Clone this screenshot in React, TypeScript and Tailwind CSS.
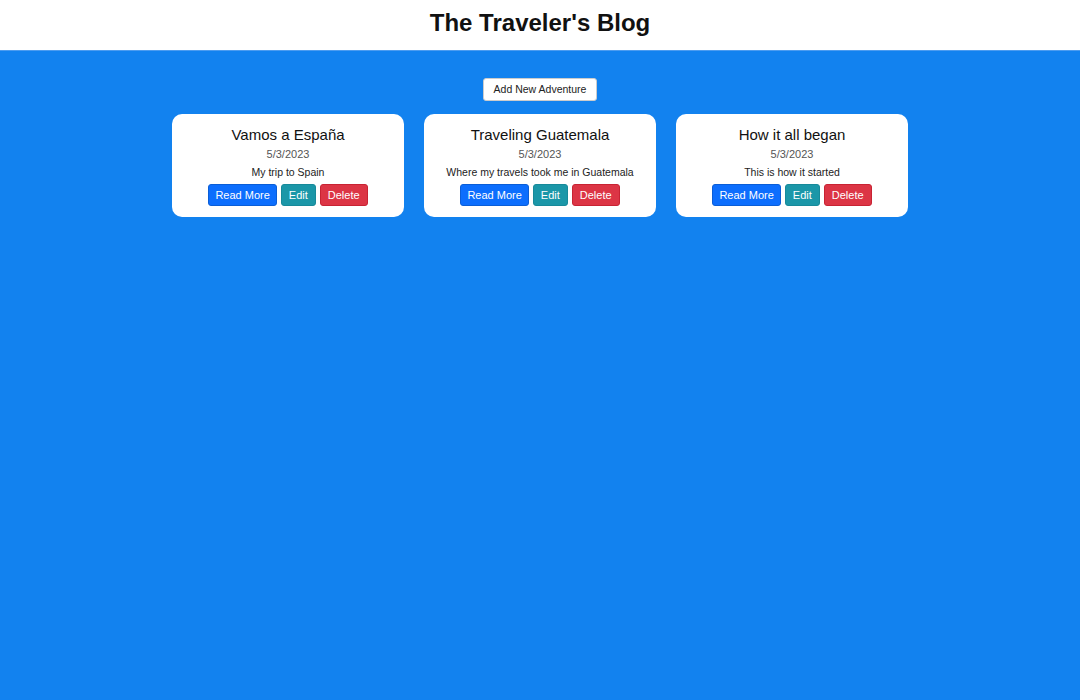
const posts = [
  { title: 'Vamos a España', date: '5/3/2023', summary: 'My trip to Spain' },
  { title: 'Traveling Guatemala', date: '5/3/2023', summary: 'Where my travels took me in Guatemala' },
  { title: 'How it all began', date: '5/3/2023', summary: 'This is how it started' },
];

function PostCard({ title, date, summary }: { title: string; date: string; summary: string }) {
  return (
    <div className="w-[232px] h-[103px] bg-white rounded-[10px] flex flex-col items-center pt-[11px]">
      <h2 className="text-[15px] leading-[20px] font-medium text-[#111]">{title}</h2>
      <p className="mt-[2px] text-[11px] leading-[15px] text-[#555]">{date}</p>
      <p className="mt-[3px] text-[10.5px] leading-[14px] text-[#222]">{summary}</p>
      <div className="mt-[5px] flex gap-[4px]">
        <button className="h-[22px] px-[6px] rounded-[3px] bg-[#0d6efd] border border-[#0b5ed7] text-white text-[11px]">
          Read More
        </button>
        <button className="h-[22px] px-[7px] rounded-[3px] bg-[#1b97a8] border border-[#178a9a] text-white text-[11px]">
          Edit
        </button>
        <button className="h-[22px] px-[7px] rounded-[3px] bg-[#dc3545] border border-[#c82333] text-white text-[11px]">
          Delete
        </button>
      </div>
    </div>
  );
}

export default function App() {
  return (
    <div className="min-h-[700px] bg-[#1282ef] font-['Liberation_Sans',Arial,sans-serif]">
      <header className="h-[51px] bg-white border-b border-[#4c9cf0] flex items-center justify-center">
        <h1 className="text-[24px] font-bold text-[#111] -mt-[5px]">The Traveler's Blog</h1>
      </header>
      <div className="flex flex-col items-center pt-[27px]">
        <button className="h-[23px] px-[9.5px] bg-white rounded-[3px] border border-[#ccc] text-[10.5px] text-[#222]">
          Add New Adventure
        </button>
        <div className="mt-[13px] flex gap-[20px]">
          {posts.map((p) => (
            <PostCard key={p.title} {...p} />
          ))}
        </div>
      </div>
    </div>
  );
}
